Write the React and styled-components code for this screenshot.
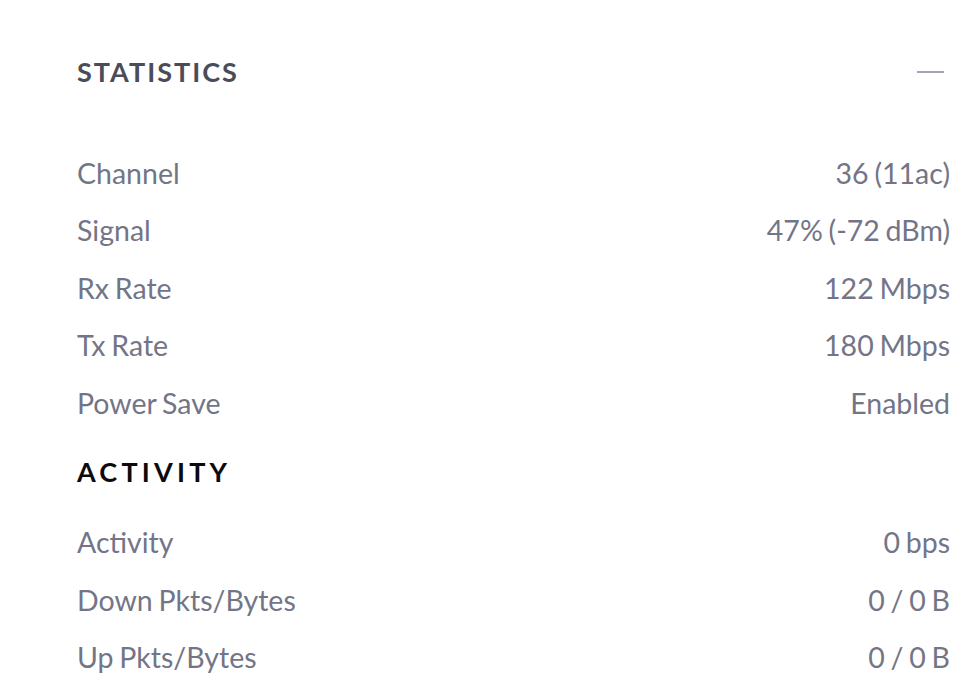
import React from "react";
import styled, { createGlobalStyle } from "styled-components";

const Global = createGlobalStyle`
  html, body { margin: 0; padding: 0; background: #fff; }
  body { font-family: Lato, "Noto Sans", sans-serif; }
`;

const Panel = styled.div`
  padding: 52px 24px 0 77px;
  width: 974px;
  box-sizing: border-box;
`;

const Header = styled.div`
  display: flex;
  align-items: center;
  justify-content: space-between;
  height: 40px;
  margin-bottom: 52px;
`;

const Title = styled.h2`
  margin: 0;
  font-size: 27px;
  font-weight: 700;
  letter-spacing: ${(p) => p.$spacing || "2px"};
  color: ${(p) => p.$color || "#4a4c58"};
  line-height: 40px;
`;

const Collapse = styled.span`
  display: block;
  width: 27px;
  height: 2px;
  background: #a3a5b6;
  margin-right: 6px;
`;

const List = styled.div`
  display: flex;
  flex-direction: column;
`;

const Row = styled.div`
  display: flex;
  justify-content: space-between;
  align-items: center;
  height: 57.5px;
  font-size: 28.5px;
  word-spacing: -1.5px;
  color: #737587;
`;

const SubHeader = styled.div`
  margin: 20px 0 22px;
`;

const stats = [
  ["Channel", "36 (11ac)"],
  ["Signal", "47% (-72 dBm)"],
  ["Rx Rate", "122 Mbps"],
  ["Tx Rate", "180 Mbps"],
  ["Power Save", "Enabled"],
];
const activity = [
  ["Activity", "0 bps"],
  ["Down Pkts/Bytes", "0 / 0 B"],
  ["Up Pkts/Bytes", "0 / 0 B"],
];

export default function App() {
  return (
    <>
      <Global />
      <Panel>
        <Header>
          <Title>STATISTICS</Title>
          <Collapse />
        </Header>
        <List>
          {stats.map(([k, v]) => (
            <Row key={k}>
              <span>{k}</span>
              <span>{v}</span>
            </Row>
          ))}
        </List>
        <SubHeader>
          <Title $color="#0b0b0d" $spacing="4.2px">ACTIVITY</Title>
        </SubHeader>
        <List>
          {activity.map(([k, v]) => (
            <Row key={k}>
              <span>{k}</span>
              <span>{v}</span>
            </Row>
          ))}
        </List>
      </Panel>
    </>
  );
}
